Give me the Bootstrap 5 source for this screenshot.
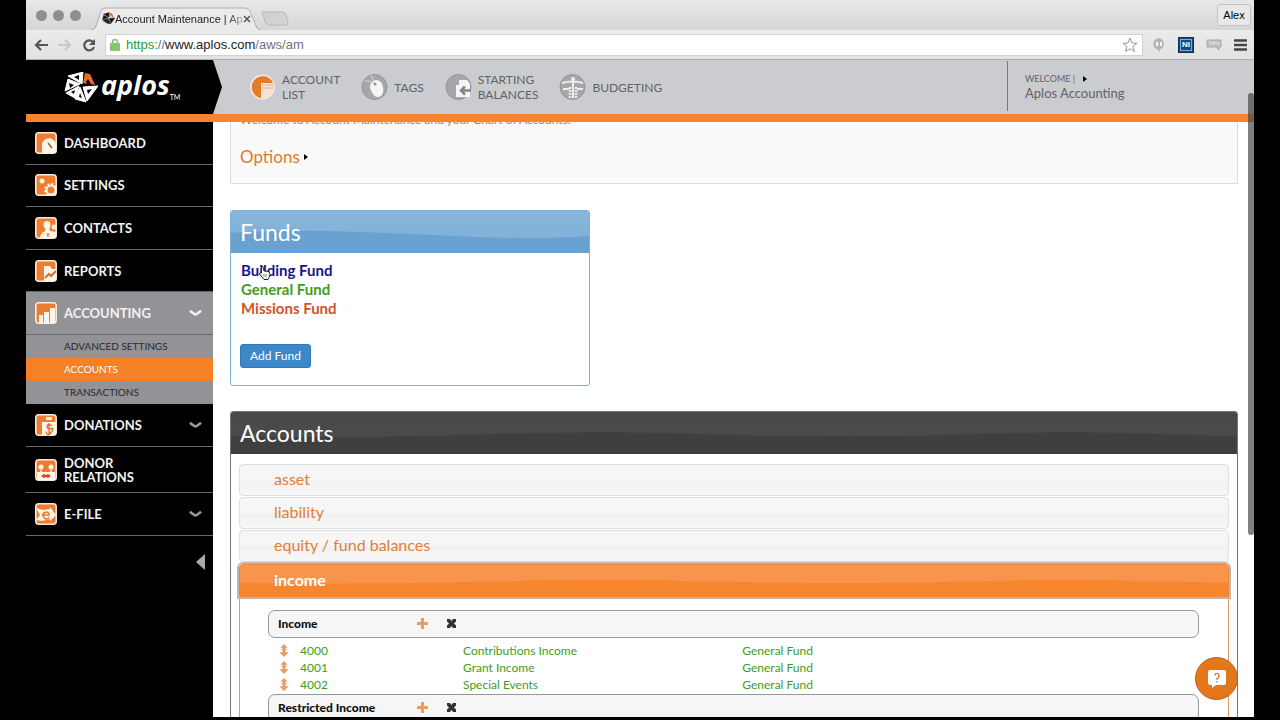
<!DOCTYPE html>
<html lang="en">
<head>
<meta charset="utf-8">
<meta name="viewport" content="width=device-width, initial-scale=1">
<title>Account Maintenance | Aplos</title>
<link href="https://cdn.jsdelivr.net/npm/bootstrap@5.3.0/dist/css/bootstrap.min.css" rel="stylesheet">
<style>
:root{--orange:#f58433;--ink:#626265;--green:#3f9c1c}
body{background:#000;font-family:Lato,"Open Sans",sans-serif;font-size:12px;line-height:17px;color:#222}
a{text-decoration:none}
svg{display:block;flex:none}
button{line-height:inherit}
.bare{border:0;background:none;padding:0}
.browser{margin:0 26px;height:calc(100vh - 3px);background:#fff}
.chrome-font{font-family:"Liberation Sans",Arial,sans-serif;color:#222}
.tabstrip{height:30px;background:linear-gradient(#e8e8e8,#d6d6d6);padding:0 3px 0 10px}
.lights{gap:6px}
.tl{width:11px;height:11px;border-radius:50%;background:#8e8e90}
.tab{width:170px;height:23px;font-size:11px;line-height:14px;margin-left:10px}
.tab-body{padding:0 12px 0 11px}
.tab-title{-webkit-mask:linear-gradient(90deg,#000 86%,rgba(0,0,0,.3));mask:linear-gradient(90deg,#000 86%,rgba(0,0,0,.3))}
.alex{height:22px;width:34px;font-size:11px;border:1px solid #c4c4c4;border-radius:3px;background:#e8e8e8}
.toolbar{height:30px;background:linear-gradient(#ebebeb,#e2e2e2);border-bottom:1px solid #b0b0b0;padding:0 7px 0 8px}
.address{height:22px;border:1px solid #d2d2d2;background:#fff;padding:0 4px}
.url{font-size:13px;padding-left:6px}
.url a{color:#222}
.extensions{gap:12px;padding-left:9px}
.ni{width:16px;height:16px;background:#174a7c;border:1px solid #0b2e52;outline:1px solid #86a9c9;outline-offset:-3px;color:#fff;font:bold 8px/14px "Liberation Sans",sans-serif}
.apphead{height:62px;background:#cbccd0;border-bottom:8px solid var(--orange);color:var(--ink)}
.brandbox{width:196px;padding-left:38px;background:#000;clip-path:polygon(0 0,187px 0,100% 50%,187px 100%,0 100%)}
.brandname{font:italic bold 27px/34px "Open Sans",sans-serif;color:#fff;margin:0 0 4px 3px}
.tm{font-size:7px;margin-bottom:8px}
.topnav{padding-left:27px;gap:21px;line-height:15px}
.topnav a{color:var(--ink);gap:6px}
.welcome{width:247px;border-left:1px solid #77787c;padding-left:17px;height:50px;margin-top:1px}
.who{font-size:13px;line-height:15px}
.fs-9{font-size:9px;line-height:14px}
.sidebar{width:187px;background:#000;font-size:13px;font-weight:700;line-height:14px}
.maingroup{height:213px}
.side{color:#f2f2f2;border-bottom:1px solid #66666a;padding:0 11px 0 9px;gap:7px}
.side:hover{color:#fff}
.h43{height:43px}.h46{height:46px}
.on{background:#929297;border-color:#6b6b70}
.subs a{height:23px;padding-left:38px;font-size:10px;line-height:23px;background:#929297;color:#29292c;font-weight:400;display:block}
.subs a.cur{background:#f58025;color:#fff}
.collapse-btn{margin-top:18px}
.pane{padding:0 16px 0 17px;min-width:0}
.intro{margin-top:-22px;height:84px;padding:10px 9px;background:#fafafa;border:1px solid #dcdcdc;color:#d9712a}
.intro p{margin:0 0 18px;line-height:17px}
.opt{font-size:17px;line-height:22px;color:#e07b2c}
.opt:hover{color:#c5641a}
.panelx{border:1px solid #7db0d2;border-radius:3px}
.panelx>header{height:42px;padding-left:9px;position:relative;overflow:hidden;border-radius:2px 2px 0 0}
.panelx h2{font-size:23px;line-height:42px;margin:0;color:#fff;font-weight:400;position:relative}
.wave{position:absolute;left:0;top:0;width:100%;height:100%}
.funds{max-width:360px;height:176px;margin:26px 0 25px}
.funds>header{background:linear-gradient(#88b5da,#7eb0d8);color:#69a1d0}
.fundlist{padding:8px 9px 26px 10px;font-size:15px;line-height:19px;font-weight:700}
.btn-fund{font-size:12px;line-height:16px;padding:3px 9px;background:#3c87c8;border:1px solid #3279b8;border-radius:3px;color:#fff;margin-left:9px}
.accts{border-color:#75757a}
.accts>header{background:linear-gradient(#484848,#4d4d4d);color:#3f3f3f}
.accbody{padding:10px 8px 0}
.acc{display:block;width:100%;height:32px;margin-bottom:1px;padding:0 0 2px 34px;text-align:left;border:1px solid #dfdfdf;border-radius:4px;background:linear-gradient(#f6f6f6 49%,#f1f1f1 51%,#f7f7f7);color:#df7f38;font-size:16px;line-height:28px}
.acc.open{position:relative;overflow:hidden;background:#f8944b;color:#f7862f;border-color:var(--orange);border-radius:4px 4px 0 0;outline:2px solid #bdb7b4;margin:2px 0 0;height:33px;font-weight:700}
.acc.open span{position:relative;color:#fff}
.openbody{border:1px solid #e59a5c;border-width:0 1px;padding:13px 29px 0 28px;height:160px}
.bar{height:28px;border:1px solid #98989c;border-radius:7px;background:#f6f6f6;padding:0 0 2px 9px;color:#111;font-weight:700}
.bar b{width:139px}
.bar .bare+.bare{margin-left:18px}
.ledger{width:100%;margin:4px 0 1px;table-layout:fixed}
.ledger td{padding:0;height:17px;line-height:17px;color:var(--green)}
.ledger td a{color:inherit}
.c1{width:32px}.c2{width:163px}.c3{width:30%}
.thumb{position:absolute;right:26px;top:93px;width:6px;height:442px;border-radius:3px;background:rgba(60,60,60,.65);z-index:5}
.hand{position:absolute;left:17px;top:4px}
.help{position:fixed;right:42px;bottom:20px;width:43px;height:43px;border-radius:50%;background:#e4761b;border:1px solid #b8651f;z-index:6}
</style>
</head>
<body>
<svg width="0" height="0" class="position-absolute"><defs>
<symbol id="mark" viewBox="0 0 34 31"><path d="M4 4L19 0l-1 12zM1 19L4 7l12 5zM2 21l13-7-4 12zM11 27l5-12 6 15zM19 15l15-1-11 15z" fill="currentColor" stroke="currentColor" stroke-linejoin="round"/><path d="M10 5l5-2v5zM5 11l5 2-4 3zM7 20l4-2-1 4zM15 25l1-4 2 5zM23 18l5-1-4 5z" fill="#000"/><path d="M21 1l5 1 5 11-4-1-3-5-2 3 1 2-4-1z" fill="#ea6a23"/></symbol>
<symbol id="wv" viewBox="0 0 1000 42" preserveAspectRatio="none"><path d="M0 22Q120 19 260 20T620 25 1000 25V42H0z" fill="currentColor"/></symbol>
<symbol id="wv2" viewBox="0 0 1000 42" preserveAspectRatio="none"><path d="M0 24Q100 26 200 24C300 20 380 20 430 21C520 24 590 25 680 24C780 20 840 20 890 21Q950 23 1000 24V42H0z" fill="currentColor"/></symbol>
<symbol id="chev" viewBox="0 0 14 8"><path d="M1 1.500q5 4 6 4t6-4" fill="none" stroke="currentColor" stroke-width="2.800"/></symbol>
<symbol id="tile" viewBox="0 0 22 22"><rect x=".8" y=".8" width="20.4" height="20.4" rx="3" fill="#ed7d31" stroke="#f9e9db" stroke-width="1.6"/></symbol>
<symbol id="move" viewBox="0 0 10 14"><path d="M5 0l4 4H6.500v5H10L5 14 0 9h3.500V4H1z" fill="#e99b60"/><path d="M2 6h6" stroke="#e99b60"/></symbol>
<symbol id="plus" viewBox="0 0 11 11"><path d="M4 0h3v4h4v3H7v4H4V7H0V4h4z" fill="#ee9c5e"/></symbol>
<symbol id="cross" viewBox="0 0 11 11"><path d="M1 1h3l1.500 2L7 1h3v2.500l-2 2 2 2V10H7L5.500 8 4 10H1V7.500l2-2-2-2z" fill="#333"/></symbol>
</defs></svg>

<div class="browser d-flex flex-column overflow-hidden">
 <div class="tabstrip chrome-font d-flex align-items-end flex-shrink-0">
  <div class="lights d-flex align-self-center"><span class="tl"></span><span class="tl"></span><span class="tl"></span></div>
  <div class="tab position-relative">
   <svg class="position-absolute" width="170" height="23"><path d="M0 23q4 0 5-4l5-15q1-3 4-3h140q3 0 5 3l6 15q1 4 5 4" fill="#ebebeb" stroke="#b0b0b0"/></svg>
   <div class="tab-body position-relative d-flex align-items-center h-100">
    <svg width="13" height="13" color="#222"><use href="#mark"/></svg>
    <span class="tab-title text-nowrap">Account Maintenance | Ap</span>
    <button class="bare ms-auto" aria-label="Close tab"><svg width="8" height="8"><path d="M1 1l6 6M7 1L1 7" stroke="#555" stroke-width="1.500"/></svg></button>
   </div>
  </div>
  <svg class="align-self-end mb-1" width="28" height="15"><path d="M1 1h20q3 0 4 3l2 7q0 3-2 3H8q-3 0-4-4z" fill="#d2d2d2" stroke="#b8b8b8"/></svg>
  <button class="alex ms-auto align-self-center p-0">Alex</button>
 </div>
 <div class="toolbar d-flex align-items-center chrome-font flex-shrink-0">
  <svg width="67" height="16" fill="none" stroke-width="2.200"><path d="M14 8H2M7 3L2 8l5 5" stroke="#555"/><path d="M24 8h12M31 3l5 5-5 5" stroke="#c8c8c8"/><path d="M59 5a5 5 0 1 0 1 5" stroke="#555"/><path d="M61 2v6h-6z" fill="#555"/></svg>
  <div class="address d-flex align-items-center flex-fill ms-1">
   <svg width="10" height="13"><path d="M2.500 6V4a2.500 2.500 0 0 1 5 0v2" fill="none" stroke="#8bbf77" stroke-width="1.500"/><rect y="5" width="10" height="8" rx="1" fill="#85c56d"/></svg>
   <div class="url flex-fill text-nowrap"><a href="#"><span style="color:#2a9a2f">https:</span><span class="text-secondary">//</span>www.aplos.com<span class="text-secondary">/aws/am</span></a></div>
   <svg width="16" height="16" viewBox="0 0 16 16"><path d="M8 1l2 5 5 .3-4 3.200 1.400 5L8 11.700l-4.400 2.800L5 9.500 1 6.300 6 6z" fill="#fff" stroke="#999"/></svg>
  </div>
  <div class="extensions d-flex align-items-center">
   <svg width="14" height="16"><path d="M7 1a6 6 0 0 1 1 11.500V15L5 12.500A6 6 0 0 1 7 1z" fill="#b5b5b5"/><path d="M4 5h2v4H4zM8 5h2v4H8z" fill="#f3f3f3"/></svg>
   <span class="ni text-center">NI</span>
   <svg width="16" height="12"><path d="M1 1h14v7h-2v3l-3-3H1z" fill="#bdbdbd" stroke="#aaa"/><path d="M3 3h2v3M7 3h2v2H7zM11 3v3M13 3v3" stroke="#e4e4e4" fill="none"/></svg>
   <button class="bare" aria-label="Menu"><svg width="13" height="12"><path d="M0 1.500h13M0 6h13M0 10.500h13" stroke="#444" stroke-width="2.400"/></svg></button>
  </div>
 </div>

 <header class="apphead d-flex flex-shrink-0">
  <div class="brandbox d-flex align-items-center">
   <svg width="34" height="31" color="#fff"><use href="#mark"/></svg>
   <span class="brandname">aplos</span><span class="tm text-white align-self-end">TM</span>
  </div>
  <nav class="topnav d-flex align-items-center flex-fill">
   <a href="#" class="d-flex align-items-center"><svg width="27" height="28" viewBox="0 0 27 28"><circle cx="13.500" cy="14" r="12.500" fill="#f6e5d7"/><path d="M12 25A11 11 0 1 1 24 10H12z" fill="#e77a27"/><path d="M13 12h12M13 15h11" stroke="#f0ac75"/></svg><span>ACCOUNT<br>LIST</span></a>
   <a href="#" class="d-flex align-items-center"><svg width="27" height="28" viewBox="0 0 27 28"><circle cx="13.500" cy="14" r="12.500" fill="#a6a7aa" stroke="#929397"/><path d="M9 14q0-6 6-7 4 0 6 4 3 8-1 12-5 3-8-2-3-4-3-7z" fill="#f5f5f5"/><path d="M3 8q6-1 11 3M10 2l4 9" stroke="#d5d5d5" fill="none"/><circle cx="14" cy="11" r="1.500" fill="#999"/></svg><span>TAGS</span></a>
   <a href="#" class="d-flex align-items-center"><svg width="27" height="28" viewBox="0 0 27 28"><circle cx="13.500" cy="14" r="12.500" fill="#a6a7aa" stroke="#929397"/><path d="M11 24V12h3V7h8l3 4v13z" fill="#f5f5f5"/><path d="M26 17.500H16m4-4l-4 4 4 4" stroke="#858689" stroke-width="2.500" fill="none"/></svg><span>STARTING<br>BALANCES</span></a>
   <a href="#" class="d-flex align-items-center"><svg width="27" height="28" viewBox="0 0 27 28"><circle cx="13.500" cy="14" r="12.500" fill="#a6a7aa" stroke="#929397"/><circle cx="14" cy="6" r="2" fill="#eee"/><path d="M3 10q11-3 21 0M14 7v18M4 16h6M18 16h6" stroke="#eee" stroke-width="2" fill="none"/><path d="M11 14v11M17 14v11" stroke="#eee" stroke-width="2.500" stroke-dasharray="2 1"/></svg><span>BUDGETING</span></a>
  </nav>
  <div class="welcome d-flex flex-column justify-content-center">
   <div class="fs-9 d-flex align-items-center gap-2">WELCOME | <svg width="4" height="6"><path d="M0 0l4 3-4 3z"/></svg></div>
   <a href="#" class="who text-reset">Aplos Accounting</a>
  </div>
 </header>

 <div class="d-flex flex-fill overflow-hidden">
  <nav class="sidebar flex-shrink-0">
   <div class="maingroup d-flex flex-column">
    <a href="#" class="side flex-fill d-flex align-items-center"><svg width="22" height="22"><use href="#tile"/><path d="M7 21V15a7 7 0 0 1 14-3v9z" fill="#fdf4ea"/><path d="M13 11l4 5" stroke="#9b5a2c" stroke-width="1.500"/></svg>DASHBOARD</a>
    <a href="#" class="side flex-fill d-flex align-items-center"><svg width="22" height="22"><use href="#tile"/><circle cx="7" cy="7" r="2.500" fill="#fdf4ea"/><circle cx="16" cy="16" r="4.500" fill="none" stroke="#fdf4ea" stroke-width="2"/><circle cx="16" cy="16" r="6" fill="none" stroke="#fdf4ea" stroke-width="2" stroke-dasharray="2 2"/></svg>SETTINGS</a>
    <a href="#" class="side flex-fill d-flex align-items-center"><svg width="22" height="22"><use href="#tile"/><ellipse cx="12" cy="8" rx="3.500" ry="4" fill="#fdf4ea"/><circle cx="19" cy="10" r="2.500" fill="#fdf4ea"/><path d="M5 21q0-5 5-7l1-4h3l1 4 6 1v6z" fill="#fdf4ea"/><path d="M12 16l1 4 1-4" stroke="#dd8851" fill="none"/></svg>CONTACTS</a>
    <a href="#" class="side flex-fill d-flex align-items-center"><svg width="22" height="22"><use href="#tile"/><path d="M9 21V6h6l2 3h4v12z" fill="#fdf4ea"/><path d="M10 18l4-4 2 2 5-5" stroke="#d3702c" stroke-width="2" fill="none"/></svg>REPORTS</a>
    <a href="#" class="side on flex-fill d-flex align-items-center"><svg width="22" height="22"><use href="#tile"/><path d="M4 13h4v8H4zM9 10h5v11H9zM15 6h5v15h-5z" fill="#fdf4ea"/></svg>ACCOUNTING<svg class="ms-auto" width="13" height="8"><use href="#chev"/></svg></a>
   </div>
   <div class="subs"><a href="#">ADVANCED SETTINGS</a><a href="#" class="cur">ACCOUNTS</a><a href="#">TRANSACTIONS</a></div>
   <a href="#" class="side h43 d-flex align-items-center"><svg width="22" height="22"><use href="#tile"/><path d="M7 8h14v13H7z" fill="#fdf4ea"/><path d="M11 3h6v3h-6z" fill="#fdf4ea"/><path d="M17 11.500q-5-2-5 1t4 2 0 4-5-1M14 9v11" stroke="#d3702c" stroke-width="1.300" fill="none"/></svg>DONATIONS<svg class="ms-auto" width="13" height="8" color="#999"><use href="#chev"/></svg></a>
   <a href="#" class="side h46 d-flex align-items-center"><svg width="22" height="22"><use href="#tile"/><circle cx="6" cy="8" r="2.500" fill="#fdf4ea"/><circle cx="16" cy="8" r="2.500" fill="#fdf4ea"/><path d="M2 13h3l1-3 1 3h8l1-3 1 3h3v8H2z" fill="#fdf4ea"/><path d="M6 17l3-2 2 1 2-1 3 2-3 2-2-1-2 1z" fill="#d6452c"/></svg><span>DONOR<br>RELATIONS</span></a>
   <a href="#" class="side h43 d-flex align-items-center"><svg width="22" height="22"><use href="#tile"/><path d="M1 5l7 2 7-1V4l6 8-6 6v-2l-8 2-6-1 4-5z" fill="#fdf4ea"/><path d="M8 12h6q0-4-4-2.500t-1 5 5-.5" fill="none" stroke="#e4792f" stroke-width="1.500"/></svg>E-FILE<svg class="ms-auto" width="13" height="8" color="#999"><use href="#chev"/></svg></a>
   <button class="bare collapse-btn d-block ms-auto me-2" aria-label="Collapse menu"><svg width="9" height="16"><path d="M9 0v16L0 8z" fill="#aaa"/></svg></button>
  </nav>

  <main class="pane flex-fill">
   <section class="intro">
    <p>Welcome to Account Maintenance and your Chart of Accounts.</p>
    <a href="#" class="opt d-flex align-items-center gap-1">Options <svg width="4" height="6"><path d="M0 0l4 3-4 3z"/></svg></a>
   </section>
   <section class="panelx funds">
    <header><svg class="wave"><use href="#wv"/></svg><h2>Funds</h2></header>
    <div class="fundlist d-flex flex-column align-items-start">
     <a href="#" class="position-relative" style="color:#14148a">Building Fund<svg class="hand" width="13" height="15" viewBox="0 0 13 15"><path d="M3.500 1q1-.5 1.500 1l1 4 5 .5q2 3 0 6l-1 2H6L1.500 9q0-2 2-1z" fill="#fff" stroke="#222"/><path d="M6 9v3M8 9v3" stroke="#666" stroke-width=".8"/></svg></a>
     <a href="#" style="color:#3f9c1c">General Fund</a>
     <a href="#" style="color:#d0532a">Missions Fund</a>
    </div>
    <button class="btn-fund">Add Fund</button>
   </section>
   <section class="panelx accts">
    <header><svg class="wave"><use href="#wv2"/></svg><h2>Accounts</h2></header>
    <div class="accbody">
     <button class="acc">asset</button>
     <button class="acc">liability</button>
     <button class="acc">equity / fund balances</button>
     <button class="acc open" aria-expanded="true"><svg class="wave"><use href="#wv2"/></svg><span>income</span></button>
     <div class="openbody">
      <div class="bar d-flex align-items-center"><b>Income</b><button class="bare" aria-label="Add"><svg width="11" height="11"><use href="#plus"/></svg></button><button class="bare" aria-label="Remove"><svg width="11" height="11"><use href="#cross"/></svg></button></div>
      <table class="ledger">
       <colgroup><col class="c1"><col class="c2"><col class="c3"><col></colgroup>
       <tbody>
       <tr><td><svg class="mx-auto" width="10" height="13"><use href="#move"/></svg></td><td><a href="#">4000</a></td><td><a href="#">Contributions Income</a></td><td>General Fund</td></tr>
       <tr><td><svg class="mx-auto" width="10" height="13"><use href="#move"/></svg></td><td><a href="#">4001</a></td><td><a href="#">Grant Income</a></td><td>General Fund</td></tr>
       <tr><td><svg class="mx-auto" width="10" height="13"><use href="#move"/></svg></td><td><a href="#">4002</a></td><td><a href="#">Special Events</a></td><td>General Fund</td></tr>
       </tbody>
      </table>
      <div class="bar d-flex align-items-center"><b>Restricted Income</b><button class="bare" aria-label="Add"><svg width="11" height="11"><use href="#plus"/></svg></button><button class="bare" aria-label="Remove"><svg width="11" height="11"><use href="#cross"/></svg></button></div>
     </div>
    </div>
   </section>
  </main>
 </div>
</div>
<div class="thumb"></div>
<button class="help d-flex align-items-center justify-content-center p-0" aria-label="Help"><svg width="20" height="20" viewBox="0 0 20 20"><path d="M3 1h14q2 0 2 2v11q0 2-2 2H9l-4 3v-3H3q-2 0-2-2V3q0-2 2-2z" fill="#fff"/><path d="M8 6.500q0-2 2-2t2 2-2 3v1.500M10 12v1.500" fill="none" stroke="#c96a1d" stroke-width="1.200"/></svg></button>
<script src="https://cdn.jsdelivr.net/npm/bootstrap@5.3.0/dist/js/bootstrap.bundle.min.js"></script>
</body>
</html>
